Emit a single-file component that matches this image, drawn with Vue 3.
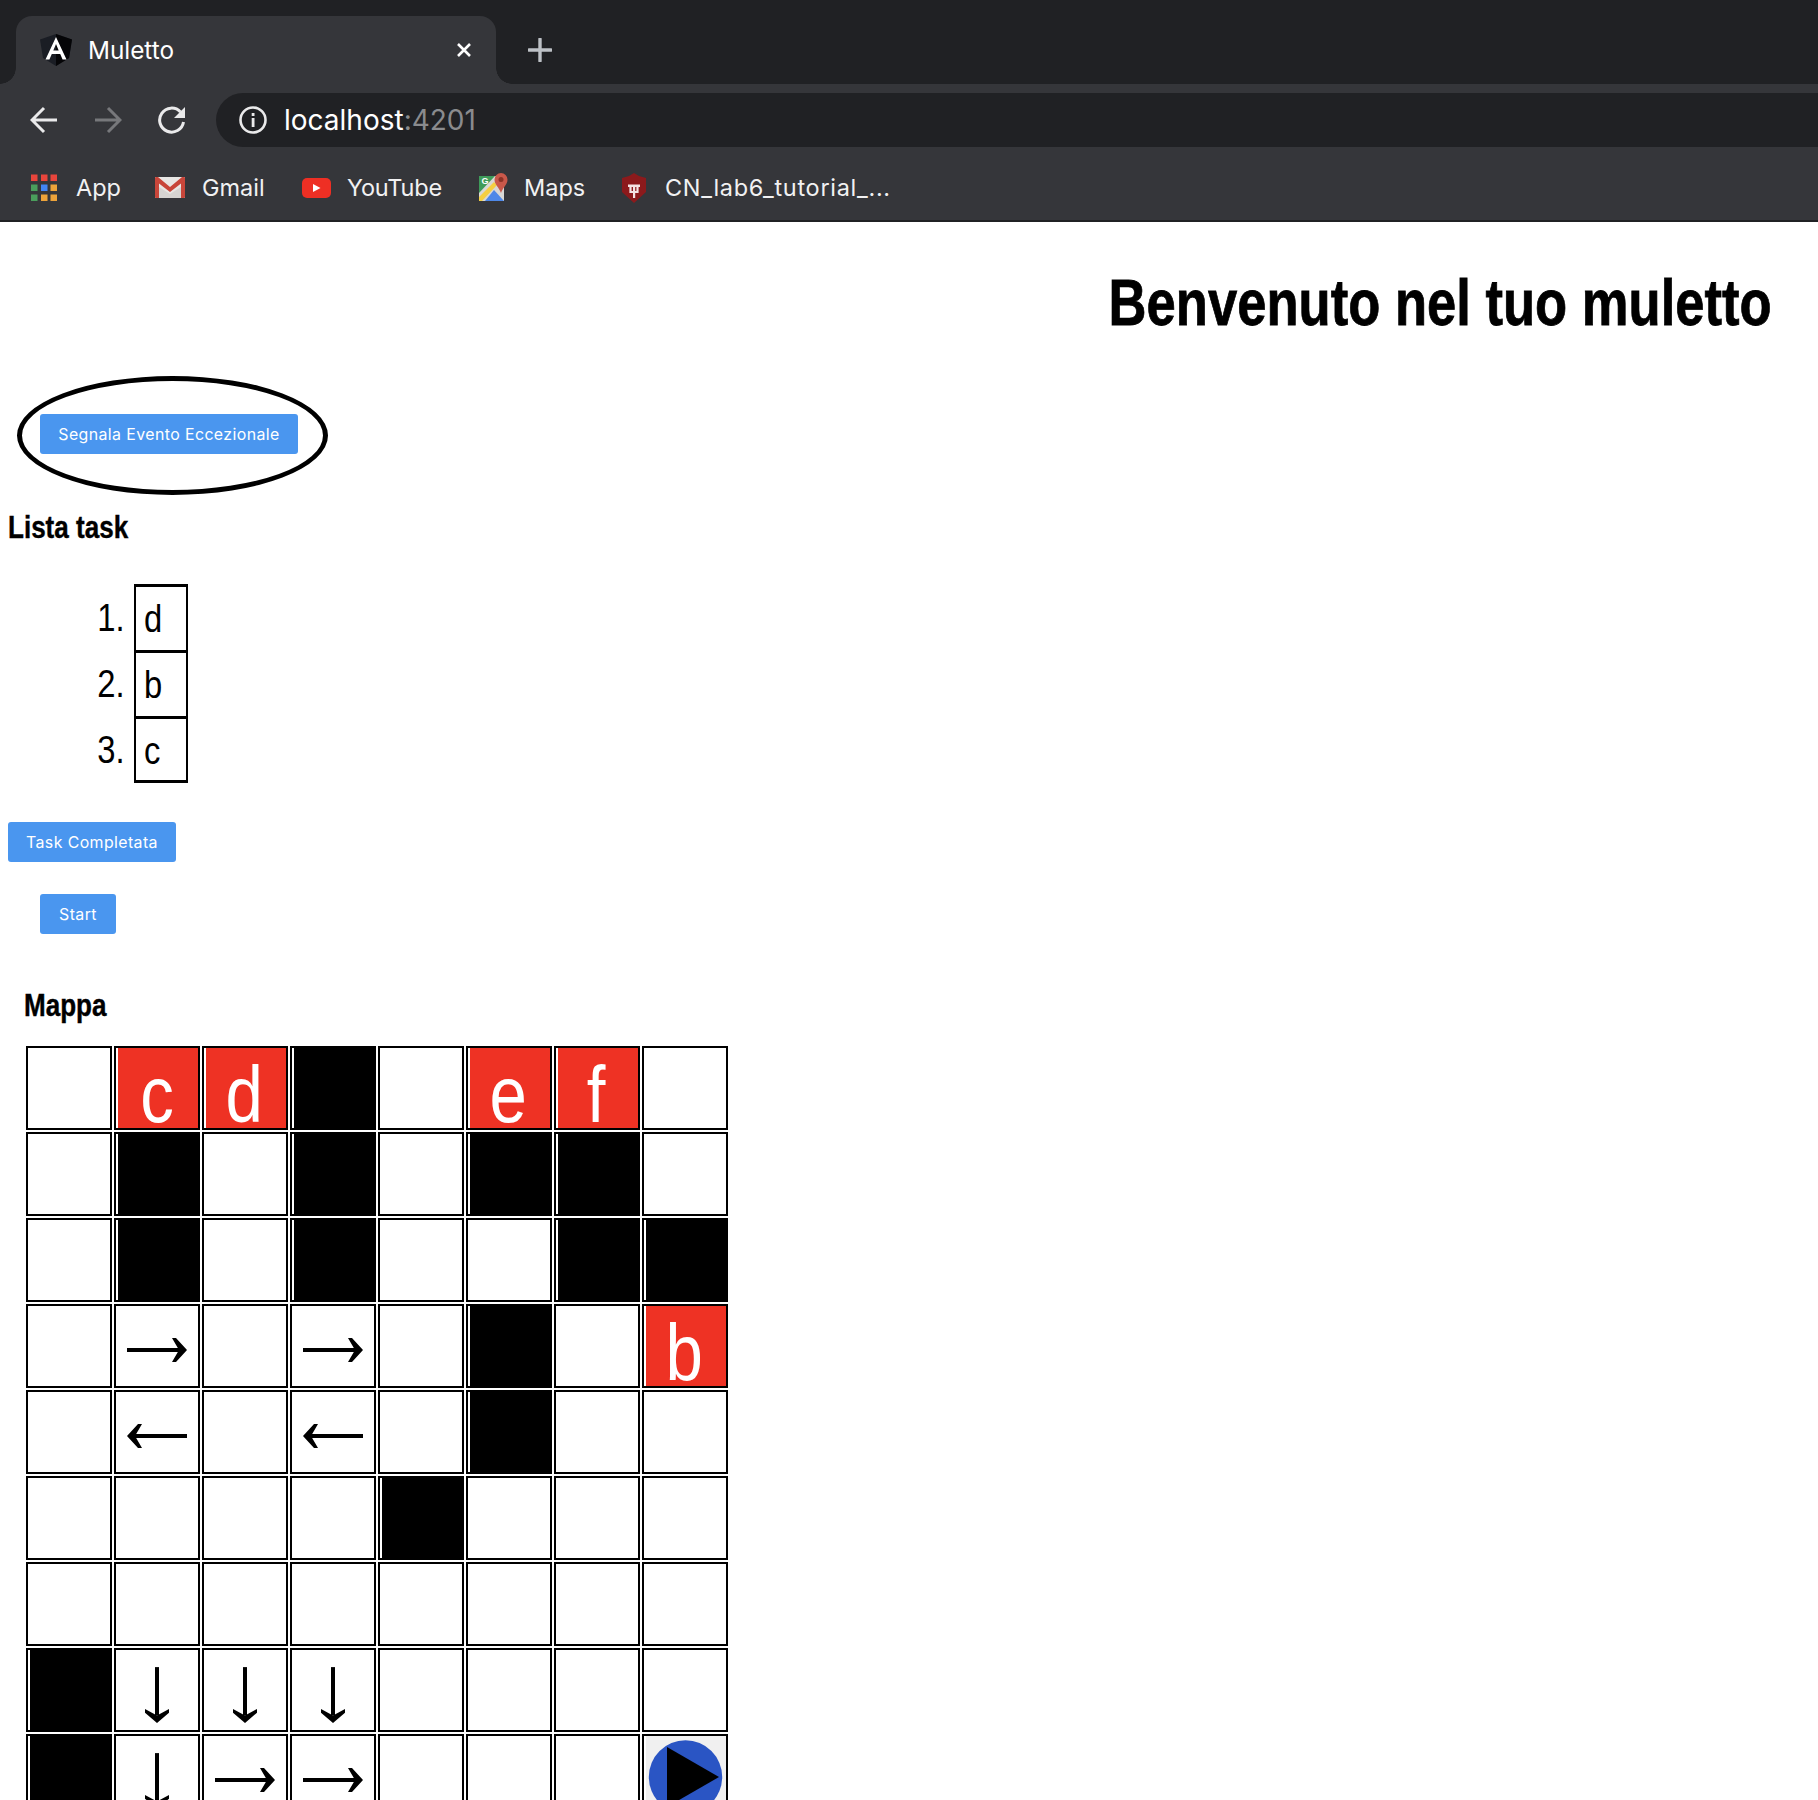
<script setup>
const bookmarks = [
  { name: 'App', icon: 'apps', w: 126, g: 17, ls: 0 },
  { name: 'Gmail', icon: 'gmail', w: 146, g: 17, ls: 0 },
  { name: 'YouTube', icon: 'yt', w: 178, g: 16, ls: -0.2 },
  { name: 'Maps', icon: 'maps', w: 141, g: 15, ls: 0 },
  { name: 'CN_lab6_tutorial_...', icon: 'cn', w: 240, g: 15, ls: 0.7 }
]
const tasks = ['d', 'b', 'c']
const B = { t: 'black' }
const E = { t: 'empty' }
const L = (c) => ({ t: 'letter', c })
const A = (d) => ({ t: 'arrow', d })
const grid = [
  [E, L('c'), L('d'), B, E, L('e'), L('f'), E],
  [E, B, E, B, E, B, B, E],
  [E, B, E, B, E, E, B, B],
  [E, A('r'), E, A('r'), E, B, E, L('b')],
  [E, A('l'), E, A('l'), E, B, E, E],
  [E, E, E, E, B, E, E, E],
  [E, E, E, E, E, E, E, E],
  [B, A('d'), A('d'), A('d'), E, E, E, E],
  [B, A('d'), A('r'), A('r'), E, E, E, { t: 'robot' }]
]
const arrowTransforms = {
  r: 'translateY(4px)',
  l: 'translateY(4px) rotate(180deg)',
  d: 'translateY(5px) rotate(90deg) scaleX(0.93)'
}
const arrowStyle = (d) => ({ transform: arrowTransforms[d] })
</script>

<template>
  <div class="page">
    <header class="chrome">
      <div class="tabstrip">
        <div class="tab">
          <svg class="fav" viewBox="0 0 32 32">
            <path d="M16 0 L32 5.500 L29 24 L16 32 L3 24 L0 5.500 Z" fill="#1a1d24" />
            <path d="M16 0 L32 5.500 L29 24 L16 32 Z" fill="#050507" />
            <path d="M16 3 L26.500 25.500 H22.600 L20.200 20 H11.800 L9.400 25.500 H5.500 Z M13.300 16.500 H18.700 L16 10 Z" fill="#fff" fill-rule="evenodd" />
          </svg>
          <span class="tabtitle">Muletto</span>
          <svg class="tabx" viewBox="0 0 16 16"><path d="M2 2 L14 14 M14 2 L2 14" stroke="#fff" stroke-width="2.600" /></svg>
        </div>
        <svg class="plus" viewBox="0 0 24 24"><path d="M12 1 V23 M1 12 H23" stroke="#bdc1c6" stroke-width="3.400" stroke-linecap="round" /></svg>
      </div>
      <div class="toolbar">
        <svg class="nav" viewBox="0 0 28 28"><path d="M2 14 H27 M14 2 L2 14 L14 26" fill="none" stroke="#eaeaeb" stroke-width="3" /></svg>
        <svg class="nav dim" viewBox="0 0 28 28"><path d="M1 14 H26 M14 2 L26 14 L14 26" fill="none" stroke="#77787b" stroke-width="3" /></svg>
        <svg class="nav reload" viewBox="0 0 28 28"><path d="M22.500 6 A12 12 0 1 0 25.500 16" fill="none" stroke="#eaeaeb" stroke-width="3" /><path d="M27 1 V12 H16 Z" fill="#eaeaeb" /></svg>
        <div class="omni">
          <svg class="info" viewBox="0 0 28 28"><circle cx="14" cy="14" r="12.500" fill="none" stroke="#eaeaeb" stroke-width="2.600" /><rect x="12.700" y="12" width="2.800" height="9" fill="#eaeaeb" /><rect x="12.700" y="7" width="2.800" height="3" fill="#eaeaeb" /></svg>
          <span class="url">localhost<span class="port">:4201</span></span>
        </div>
      </div>
      <div class="bookmarks">
        <div v-for="b in bookmarks" :key="b.name" class="bm" :style="{ width: b.w + 'px' }">
          <svg v-if="b.icon === 'apps'" class="bmi" viewBox="0 0 30 30">
            <rect x="2" y="1.500" width="6.500" height="6.500" fill="#e8453c" /><rect x="12" y="1.500" width="6.500" height="6.500" fill="#e8453c" /><rect x="21.500" y="1.500" width="6.500" height="6.500" fill="#e8453c" />
            <rect x="2" y="11.500" width="6.500" height="6.500" fill="#4a9e5c" /><rect x="12" y="11.500" width="6.500" height="6.500" fill="#4285f4" /><rect x="21.500" y="11.500" width="6.500" height="6.500" fill="#eda33a" />
            <rect x="2" y="21.500" width="6.500" height="6.500" fill="#4a9e5c" /><rect x="12" y="21.500" width="6.500" height="6.500" fill="#eda33a" /><rect x="21.500" y="21.500" width="6.500" height="6.500" fill="#eda33a" />
          </svg>
          <svg v-else-if="b.icon === 'gmail'" class="bmi" viewBox="0 0 30 30">
            <rect x="0" y="4" width="30" height="21" rx="1" fill="#e8e6e4" />
            <path d="M15 25 L2.500 25 L2.500 13 L15 21 L27.500 13 L27.500 25 Z" fill="#d6d4d2" />
            <path d="M0 5 C0 4.500 0.500 4 1 4 H3 L15 14 L27 4 H29 C29.500 4 30 4.500 30 5 V24 C30 24.500 29.500 25 29 25 H26 V10.500 L15 19 L4 10.500 V25 H1 C0.500 25 0 24.500 0 24 Z" fill="#c8463a" />
          </svg>
          <svg v-else-if="b.icon === 'yt'" class="bmi" viewBox="0 0 30 30">
            <rect x="1" y="5" width="29" height="20" rx="5" fill="#ee2f24" />
            <path d="M12 11 L19.500 15 L12 19 Z" fill="#fff" />
          </svg>
          <svg v-else-if="b.icon === 'maps'" class="bmi" viewBox="0 0 30 30">
            <path d="M0 3 H25 V28 H0 Z" fill="#d9d8d5" />
            <path d="M0 3 H16 L0 20 Z" fill="#3f9b5a" />
            <path d="M0 24 L15 9 L18 12 L3 28 H0 Z" fill="#f5cf42" />
            <path d="M6 28 L15 17 L25 28 Z" fill="#4e88e8" />
            <text x="2.500" y="11" class="mapg">G</text>
            <path d="M22 0 A6.500 6.500 0 0 1 28.500 6.500 C28.500 12 24 14 22 20 C20 14 15.500 12 15.500 6.500 A6.500 6.500 0 0 1 22 0 Z" fill="#c9584a" />
            <circle cx="22" cy="6.500" r="2.500" fill="#8c3226" />
          </svg>
          <svg v-else class="bmi" viewBox="0 0 30 30">
            <path d="M14 0 L19 3 L26 5 V19 L14 30 L2 19 V5 L9 3 Z" fill="#8c1a1c" />
            <path d="M8 11.500 H20 V14 H18.600 V20 H15.200 V25 H13 V20 H9.400 V14 H8 Z M11.600 14 V18 H13 V14 Z M15.200 14 V18 H16.400 V14 Z" fill="#f4e4e4" fill-rule="evenodd" />
          </svg>
          <span class="bmlabel" :style="{ marginLeft: b.g + 'px', letterSpacing: b.ls + 'px' }">{{ b.name }}</span>
        </div>
      </div>
    </header>

    <main class="content">
      <h1 class="title"><span class="sq right">Benvenuto nel tuo muletto</span></h1>

      <div class="ring">
        <button class="btn">Segnala Evento Eccezionale</button>
      </div>

      <h3 class="lista"><span class="sq">Lista task</span></h3>

      <ol class="tasks">
        <li v-for="(t, i) in tasks" :key="t" class="taskrow">
          <span class="num"><span class="sq right">{{ i + 1 }}.</span></span>
          <span class="taskbox"><span class="sq">{{ t }}</span></span>
        </li>
      </ol>

      <button class="btn done">Task Completata</button>
      <button class="btn start">Start</button>

      <h3 class="mappa"><span class="sq">Mappa</span></h3>

      <div class="grid">
        <template v-for="(row, r) in grid" :key="r">
          <div v-for="(c, k) in row" :key="k" class="cell">
            <div v-if="c.t === 'black'" class="fill black"></div>
            <div v-else-if="c.t === 'letter'" class="fill red"><span class="sq letter">{{ c.c }}</span></div>
            <svg v-else-if="c.t === 'arrow'" class="arrow" viewBox="0 0 60 24" :style="arrowStyle(c.d)">
              <path d="M0 10 H52 V14 H0 Z" fill="#000" />
              <path d="M45 0 H49 L60 12 L49 24 H45 L52 12 Z" fill="#000" />
            </svg>
            <div v-else-if="c.t === 'robot'" class="robot">
              <svg viewBox="0 0 80 82" class="robotsvg">
                <circle cx="39.500" cy="41" r="36.700" fill="#2a55c4" />
                <path d="M21 11 L73 41 L21 71 Z" fill="#000" />
              </svg>
            </div>
          </div>
        </template>
      </div>
    </main>
  </div>
</template>

<style>
html, body { margin: 0; background: #fff; }
</style>

<style scoped>
.page { width: 1818px; height: 1800px; overflow: hidden; position: relative; font-family: "Liberation Sans", Arial, sans-serif; color: #000; background: #fff; }

.sq { display: inline-block; transform: scaleX(0.84); transform-origin: left center; white-space: nowrap; }
.sq.right { transform-origin: right center; }

.chrome { height: 222px; background: #35363a; border-bottom: 2px solid #202124; box-sizing: border-box; font-family: Inter, "Liberation Sans", sans-serif; }
.tabstrip { height: 84px; background: #202124; display: flex; align-items: flex-end; padding-left: 16px; }
.tab { position: relative; width: 480px; height: 68px; background: #35363a; border-radius: 16px 16px 0 0; display: flex; align-items: center; box-sizing: border-box; padding-left: 24px; color: #fff; }
.tab::before, .tab::after { content: ""; position: absolute; bottom: 0; width: 16px; height: 16px; }
.tab::before { left: -16px; background: radial-gradient(circle at 0 0, transparent 15.500px, #35363a 16px); }
.tab::after { right: -16px; background: radial-gradient(circle at 100% 0, transparent 15.500px, #35363a 16px); }
.fav { width: 32px; height: 32px; flex: none; }
.tabtitle { margin-left: 16px; flex: 1; font-size: 24.300px; }
.tabx { width: 16px; height: 16px; margin-right: 24px; flex: none; }
.plus { width: 24px; height: 24px; margin: 0 0 22px 32px; flex: none; }

.toolbar { height: 63px; display: flex; align-items: center; padding-left: 30px; padding-top: 8px; box-sizing: border-box; }
.nav { width: 28px; height: 28px; flex: none; margin-right: 36px; }
.nav.reload { margin-right: 30px; }
.omni { flex: 1; height: 54px; background: #202124; border-radius: 27px 0 0 27px; display: flex; align-items: center; padding-left: 23px; }
.info { width: 28px; height: 28px; flex: none; }
.url { margin-left: 17px; font-size: 28px; color: #fff; }
.port { color: #8a8b8e; }

.bookmarks { height: 73px; display: flex; align-items: center; padding-left: 29px; padding-top: 8px; box-sizing: border-box; }
.bm { display: flex; align-items: center; flex: none; }
.bmi { width: 30px; height: 30px; flex: none; }
.mapg { fill: #fff; font-size: 9px; font-family: "Liberation Sans", sans-serif; font-weight: 700; }
.bmlabel { font-size: 23.500px; color: #f1f1f2; white-space: nowrap; }

.content { position: relative; padding-left: 8px; }
.title { margin: 0; height: 154px; box-sizing: border-box; padding-top: 45px; padding-right: 46px; text-align: right; font-size: 65px; line-height: 72px; font-weight: 700; -webkit-text-stroke: 0.8px #000; }
.title .sq { transform: scaleX(0.809); }

.ring { margin-left: 9px; width: 311px; height: 119px; border: 5px solid #000; border-radius: 50%; box-sizing: border-box; display: flex; align-items: center; padding: 0 0 3px 18px; }
.btn { display: block; height: 40px; background: #4a96ef; color: #fff; border: 0; border-radius: 3px; font-family: Inter, sans-serif; font-size: 15.900px; letter-spacing: 0.4px; padding: 0 18px; white-space: nowrap; }
.ring .btn { width: 258px; padding: 0; }
.lista { margin: 13px 0 0; height: 40px; font-size: 31px; line-height: 40px; font-weight: 700; -webkit-text-stroke: 0.4px #000; }
.tasks { list-style: none; margin: 36px 0 0; padding: 0; }
.taskrow { display: flex; height: 66px; }
.num { width: 117px; text-align: right; font-size: 39px; line-height: 68px; }
.taskbox { width: 54px; margin: 0 0 -3px 9px; border-style: solid; border-color: #000; border-width: 3px 2px; box-sizing: border-box; font-size: 39px; line-height: 63px; padding-left: 8px; background: #fff; }
.taskrow:last-child .taskbox { margin-bottom: -1px; }
.done { margin-top: 40px; width: 168px; padding: 0; }
.start { margin: 32px 0 0 32px; width: 76px; padding: 0; }
.mappa { margin: 52px 0 0 16px; height: 40px; line-height: 40px; font-size: 31px; font-weight: 700; -webkit-text-stroke: 0.4px #000; }
.grid { margin: 20px 0 0 18px; display: grid; grid-template-columns: repeat(8, 86px); grid-auto-rows: 84px; gap: 2px; }
.cell { border: 2px solid #000; box-sizing: border-box; position: relative; display: flex; align-items: center; justify-content: center; background: #fff; }
.fill { position: absolute; left: 2px; top: 0; right: 0; bottom: 0; display: flex; justify-content: center; align-items: center; }
.black { background: #000; }
.red { background: #ee3224; padding-top: 14px; box-sizing: border-box; }
.letter { color: #fff; font-size: 80px; line-height: 64px; transform-origin: center center; margin-left: -3px; }
.arrow { width: 60px; height: 24px; flex: none; overflow: visible; }
.robot { position: absolute; left: 2px; top: 0; right: 0; bottom: 0; background: #f0f0f0; overflow: hidden; }
.robotsvg { position: absolute; left: 0; top: 0; width: 80px; height: 82px; }
</style>
